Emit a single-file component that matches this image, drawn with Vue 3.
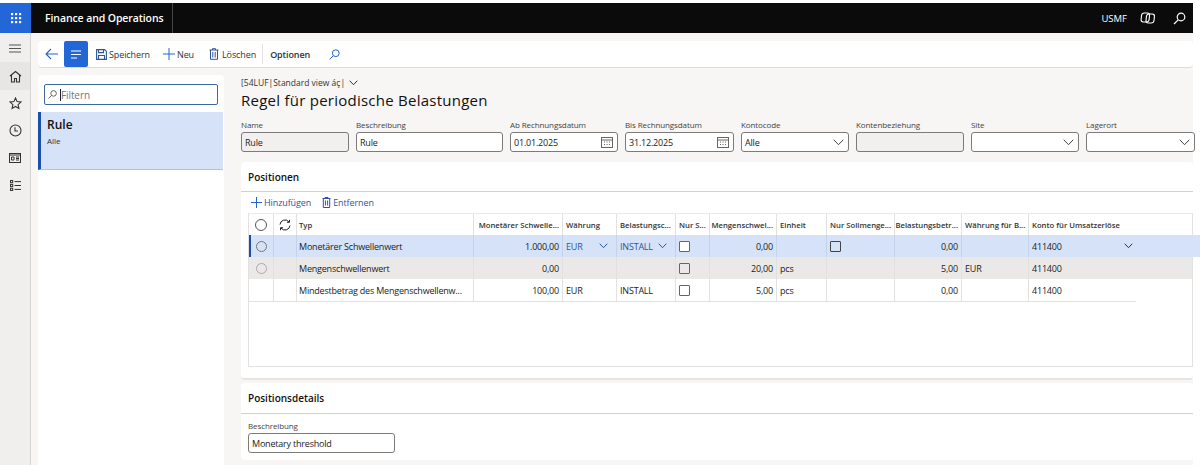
<script setup>
const columns = [
  { label: '', cls: 'sel' },
  { label: '', cls: 'sync' },
  { label: 'Typ' },
  { label: 'Monetärer Schwelle...', right: true },
  { label: 'Währung' },
  { label: 'Belastungsc...' },
  { label: 'Nur S...' },
  { label: 'Mengenschwel...', right: true },
  { label: 'Einheit' },
  { label: 'Nur Sollmenge...' },
  { label: 'Belastungsbetr...', right: true },
  { label: 'Währung für B...' },
  { label: 'Konto für Umsatzerlöse' },
]
const rows = [
  { cls: 'selected', typ: 'Monetärer Schwellenwert', mon: '1.000,00', cur: 'EUR', code: 'INSTALL', qty: '0,00', unit: '', amount: '0,00', cur2: '', acct: '411400', edit: true, radio: true, soll: true },
  { cls: 'grey', typ: 'Mengenschwellenwert', mon: '0,00', cur: '', code: '', qty: '20,00', unit: 'pcs', amount: '5,00', cur2: 'EUR', acct: '411400', radio: true },
  { cls: 'plain', typ: 'Mindestbetrag des Mengenschwellenw...', mon: '100,00', cur: 'EUR', code: 'INSTALL', qty: '5,00', unit: 'pcs', amount: '0,00', cur2: '', acct: '411400' },
]
const fields = [
  { label: 'Name', value: 'Rule', w: 108, cls: 'ro' },
  { label: 'Beschreibung', value: 'Rule', w: 147 },
  { label: 'Ab Rechnungsdatum', value: '01.01.2025', w: 108, icon: 'cal' },
  { label: 'Bis Rechnungsdatum', value: '31.12.2025', w: 109, icon: 'cal' },
  { label: 'Kontocode', value: 'Alle', w: 108, icon: 'chev' },
  { label: 'Kontenbeziehung', value: '', w: 108, cls: 'ro' },
  { label: 'Site', value: '', w: 108, icon: 'chev' },
  { label: 'Lagerort', value: '', w: 109, icon: 'chev' },
]
</script>

<template>
  <div class="page">
    <header class="topbar">
      <div class="waffle">
        <svg width="12" height="12" viewBox="0 0 12 12" fill="#fff"><g v-for="y in [1,5,9]" :key="y"><rect v-for="x in [1,5,9]" :key="x" :x="x" :y="y" width="2.2" height="2.2"/></g></svg>
      </div>
      <div class="brand">Finance and Operations</div>
      <div class="topright">
        <span class="company">USMF</span>
        <svg width="15" height="14" viewBox="0 0 15 14" fill="none" stroke="#fff" stroke-width="1.1"><rect x="1" y="2" width="8" height="9" rx="2.5" transform="skewX(-6) translate(1 0)"/><rect x="6" y="3" width="8" height="9" rx="2.5" transform="skewX(-6) translate(1 0)"/></svg>
        <svg class="tsearch" width="13" height="13" viewBox="0 0 13 13" fill="none" stroke="#fff" stroke-width="1.2"><circle cx="8" cy="5" r="3.8"/><path d="M5.2 7.8 1 12"/></svg>
      </div>
    </header>

    <div class="shell">
      <nav class="rail">
        <div class="railitem">
          <svg width="12" height="9" viewBox="0 0 12 9" stroke="#555" stroke-width="1.1"><path d="M0 1h12M0 4.500h12M0 8h12"/></svg>
        </div>
        <div class="railitem active">
          <svg width="13" height="13" viewBox="0 0 13 13" fill="none" stroke="#333" stroke-width="1.1"><path d="M1 6 6.500 1.500 12 6M2.500 5v7h3V8.500h2V12h3V5"/></svg>
        </div>
        <div class="railitem">
          <svg width="13" height="13" viewBox="0 0 13 13" fill="none" stroke="#333" stroke-width="1.1"><path d="m6.500 1 1.600 3.600 3.900.4-2.900 2.600.8 3.900-3.400-2-3.400 2 .8-3.900L1 5l3.900-.4z"/></svg>
        </div>
        <div class="railitem">
          <svg width="13" height="13" viewBox="0 0 13 13" fill="none" stroke="#333" stroke-width="1.1"><circle cx="6.500" cy="6.500" r="5.500"/><path d="M6 3.200v3.800h3"/></svg>
        </div>
        <div class="railitem">
          <svg width="12" height="10" viewBox="0 0 12 10" fill="none" stroke="#333" stroke-width="1"><rect x=".5" y=".5" width="11" height="9"/><path d="M.5 2h11M2.500 4h2.500v3H2.500zM7 4h3M7 5.500h3M7 7h3"/></svg>
        </div>
        <div class="railitem">
          <svg width="11" height="11" viewBox="0 0 11 11" fill="none" stroke="#333" stroke-width="1"><rect x=".5" y=".5" width="2.200" height="2.200"/><rect x=".5" y="4.400" width="2.200" height="2.200"/><rect x=".5" y="8.300" width="2.200" height="2.200"/><path d="M4.500 1.600H11M4.500 5.500H11M4.500 9.400H11"/></svg>
        </div>
      </nav>

      <div class="workspace">
        <div class="actionbar">
          <button class="act back">
            <svg width="13" height="12" viewBox="0 0 13 12" fill="none" stroke="#2266cc" stroke-width="1.1"><path d="M6 1 1 6l5 5M1 6h12"/></svg>
          </button>
          <button class="act listbtn">
            <svg width="12" height="9" viewBox="0 0 12 9" stroke="#fff" stroke-width="1.2"><path d="M1 1h10M1 4.500h10M1 8h6"/></svg>
          </button>
          <button class="act">
            <svg width="11" height="11" viewBox="0 0 11 11" fill="none" stroke="#2f5597" stroke-width="1.1"><path d="M.6.6h8l1.800 1.800v8H.6z"/><path d="M2.500.6v3h5v-3M2.500 10.400V6.500h6v3.900"/></svg>
            Speichern
          </button>
          <button class="act neu">
            <svg width="12" height="12" viewBox="0 0 12 12" stroke="#2266cc" stroke-width="1"><path d="M6 0v12M0 6h12"/></svg>
            Neu
          </button>
          <button class="act del">
            <svg width="10" height="12" viewBox="0 0 10 12" fill="none" stroke="#2f5597" stroke-width="1"><path d="M.5 2h9M3.500 2V.7h3V2M1.500 2v9.300h7V2M3.800 4v5.500M6.200 4v5.500"/></svg>
            Löschen
          </button>
          <span class="actsep"></span>
          <button class="act options">Optionen</button>
          <button class="act">
            <svg width="11" height="11" viewBox="0 0 11 11" fill="none" stroke="#2266cc" stroke-width="1"><circle cx="6.800" cy="4.200" r="3.400"/><path d="M4.200 6.800.6 10.400"/></svg>
          </button>
        </div>

        <div class="content">
          <aside class="listpane">
            <div class="filterwrap">
              <div class="filter">
                <svg width="9" height="9" viewBox="0 0 11 11" fill="none" stroke="#555" stroke-width="1.100"><circle cx="6.800" cy="4.200" r="3.400"/><path d="M4.200 6.800.6 10.400"/></svg>
                <span class="caret"></span>
                <span class="ph">Filtern</span>
              </div>
            </div>
            <div class="listitem">
              <div class="itemtitle">Rule</div>
              <div class="itemsub">Alle</div>
            </div>
          </aside>

          <main class="detail">
            <div class="crumb">[54LUF|Standard view áç|
              <svg width="9" height="6" viewBox="0 0 9 6" fill="none" stroke="#333"><path d="m.7.7 3.800 4 3.800-4"/></svg>
            </div>
            <h1 class="title">Regel für periodische Belastungen</h1>

            <div class="fields">
              <div v-for="f in fields" :key="f.label" class="field" :style="{ width: f.w + 'px' }">
                <label>{{ f.label }}</label>
                <div class="input" :class="f.cls">
                  <span>{{ f.value }}</span>
                  <svg v-if="f.icon === 'cal'" width="12" height="11" viewBox="0 0 12 11" fill="none" stroke="#666"><rect x=".5" y=".5" width="11" height="10"/><path d="M.5 3h11M3 5h1M5.500 5h1M8 5h1M3 7.500h1M5.500 7.500h1M8 7.500h1"/></svg>
                  <svg v-if="f.icon === 'chev'" width="11" height="7" viewBox="0 0 11 7" fill="none" stroke="#444"><path d="m.7.700 4.800 5 4.800-5"/></svg>
                </div>
              </div>
            </div>

            <section class="card positions">
              <h2>Positionen</h2>
              <div class="gridtools">
                <span class="tool">
                  <svg width="11" height="11" viewBox="0 0 11 11" stroke="#2266cc" stroke-width="1"><path d="M5.500 0v11M0 5.500h11"/></svg>
                  Hinzufügen
                </span>
                <span class="tool">
                  <svg width="9" height="11" viewBox="0 0 9 11" fill="none" stroke="#2f5597" stroke-width="1"><path d="M.5 1.500h8M3 1.500V.5h3v1M1.300 1.500v9h6.400v-9M3.400 3.500v5M5.600 3.500v5"/></svg>
                  Entfernen
                </span>
              </div>
              <div class="grid">
                <div class="row head">
                  <div v-for="(c, i) in columns" :key="i" class="cell" :class="[{ right: c.right }, c.cls]">
                    <span v-if="c.cls === 'sel'" class="radio big"></span>
                    <svg v-else-if="c.cls === 'sync'" width="12" height="12" viewBox="0 0 12 12" fill="none" stroke="#222" stroke-width="1"><path d="M1 5.500A5 5 0 0 1 10 3M11 6.500A5 5 0 0 1 2 9"/><path d="M10.500.8V3.300H8M1.500 11.200V8.700H4"/></svg>
                    <template v-else>{{ c.label }}</template>
                  </div>
                </div>
                <div v-for="r in rows" :key="r.typ" class="row" :class="r.cls">
                  <div class="cell sel"><span v-if="r.radio" class="radio"></span></div>
                  <div class="cell"></div>
                  <div class="cell">{{ r.typ }}</div>
                  <div class="cell right">{{ r.mon }}</div>
                  <div class="cell link">{{ r.cur }}<svg v-if="r.edit" width="9" height="6" viewBox="0 0 9 6" fill="none" stroke="#2f5597"><path d="m.7.700 3.800 4 3.800-4"/></svg></div>
                  <div class="cell link">{{ r.code }}<svg v-if="r.edit" width="9" height="6" viewBox="0 0 9 6" fill="none" stroke="#2f5597"><path d="m.7.700 3.800 4 3.800-4"/></svg></div>
                  <div class="cell"><span class="check"></span></div>
                  <div class="cell right">{{ r.qty }}</div>
                  <div class="cell">{{ r.unit }}</div>
                  <div class="cell"><span v-if="r.soll" class="check dark"></span></div>
                  <div class="cell right">{{ r.amount }}</div>
                  <div class="cell">{{ r.cur2 }}</div>
                  <div class="cell acct">{{ r.acct }}<svg v-if="r.edit" width="9" height="6" viewBox="0 0 9 6" fill="none" stroke="#333"><path d="m.7.700 3.800 4 3.800-4"/></svg></div>
                </div>
              </div>
            </section>

            <section class="card details">
              <h2>Positionsdetails</h2>
              <div class="detailbody">
                <label>Beschreibung</label>
                <div class="input"><span>Monetary threshold</span></div>
              </div>
            </section>
          </main>
        </div>
      </div>
    </div>
  </div>
</template>

<style>
html, body { margin: 0; background: #fff; overflow: hidden; }
</style>

<style scoped>
.page { width: 1200px; height: 465px; overflow: hidden; font-family: "Open Sans", "Noto Sans", sans-serif; color: #222; background: #fff; padding-top: 3px; box-sizing: border-box; display: flex; flex-direction: column; }
.topbar { height: 30px; width: 1193px; flex: none; background: #0b0b0b; display: flex; align-items: center; color: #fff; }
.waffle { width: 31px; height: 30px; background: #2266d8; display: flex; align-items: center; justify-content: center; }
.brand { font-size: 10.500px; font-weight: 600; padding: 0 0 0 14px; height: 100%; display: flex; align-items: center; white-space: nowrap; border-right: 1px solid #444; box-sizing: border-box; width: 142px; letter-spacing: -.1px; }
.topright { margin-left: auto; display: flex; align-items: center; gap: 13px; padding-right: 7px; }
.company { font-size: 9.500px; }
.tsearch { margin-left: 5px; }

.shell { flex: 1; display: flex; min-height: 0; }
.rail { width: 31px; flex: none; background: #f0efee; border-right: 1px solid #d8d6d4; padding-top: 2px; box-sizing: border-box; display: flex; flex-direction: column; }
.railitem { height: 27.400px; display: flex; align-items: center; justify-content: center; }
.railitem.active { background: #e8e6e4; }

.workspace { flex: none; width: 1162px; box-sizing: border-box; background: #f7f6f5; padding: 8px 0 0 7px; display: flex; flex-direction: column; }
.actionbar { width: 1155px; height: 27px; flex: none; box-sizing: border-box; background: #fff; border-radius: 4px; border-bottom: 1px solid #dedcda; display: flex; align-items: center; padding-left: 7px; }
.act { all: unset; display: inline-flex; align-items: center; gap: 2px; font-size: 9px; letter-spacing: -.1px; color: #333; margin-right: 13px; }
.back { margin-right: 6px; }
.listbtn { width: 24px; height: 26px; background: #2266d8; border-radius: 2px; justify-content: center; margin-right: 8px; }
.neu { margin-right: 15px; }
.del { gap: 3px; margin-right: 6px; }
.actsep { width: 1px; height: 20px; background: #e3e1df; margin-right: 7px; }
.options { font-weight: 600; margin-right: 19px; }

.content { flex: 1; min-height: 0; display: flex; margin-top: 7px; }
.listpane { width: 186px; flex: none; background: #fff; border-radius: 4px 4px 0 0; display: flex; flex-direction: column; }
.filterwrap { padding: 9px 6px 7px; }
.filter { height: 21px; box-sizing: border-box; border: 1px solid #3c6a9e; border-radius: 2px; display: flex; align-items: center; padding-left: 3px; gap: 3px; }
.caret { width: 1px; height: 12px; background: #222; margin-right: -3px; }
.ph { font-size: 10px; color: #777; letter-spacing: -.1px; }
.listitem { height: 58px; box-sizing: border-box; background: #d5e2f8; border-left: 3px solid #1d50a8; border-bottom: 1px solid #b9c0ca; padding: 4px 0 0 6px; width: 185px; }
.itemtitle { font-size: 12px; font-weight: 600; color: #111; line-height: 18px; }
.itemsub { font-size: 8px; color: #333; line-height: 14px; }

.detail { flex: 1; min-width: 0; padding-left: 17px; }
.crumb { font-size: 8.500px; line-height: 13px; padding-top: 1px; color: #333; display: flex; align-items: center; gap: 4px; }
.title { font-size: 15px; font-weight: 500; margin: 1px 0 8px; line-height: 20px; color: #111; letter-spacing: .25px; }
.fields { display: flex; gap: 7px; }
.field { flex: none; }
label { display: block; font-size: 8px; letter-spacing: -.1px; color: #444; line-height: 14px; white-space: nowrap; }
.input { height: 20px; box-sizing: border-box; border: 1px solid #7d7b79; border-radius: 3px; background: #fff; display: flex; align-items: center; justify-content: space-between; padding: 0 4px 0 3px; font-size: 9px; letter-spacing: -.2px; color: #222; }
.input.ro { background: #f1f0ef; }

.card { width: 952px; background: #fff; border-radius: 4px; box-sizing: border-box; }
.card h2 { font-size: 10px; font-weight: 600; color: #111; margin: 0; padding: 1px 0 0 7px; height: 28px; line-height: 28px; border-bottom: 1px solid #d3d1cf; }
.positions { height: 218px; margin-top: 10px; border-bottom: 2px solid #e6e4e2; display: flex; flex-direction: column; }
.gridtools { height: 21px; flex: none; display: flex; align-items: center; padding-left: 10px; gap: 11px; font-size: 9px; letter-spacing: -.1px; color: #2f5597; }
.tool { display: inline-flex; align-items: center; gap: 2px; }
.grid { width: 945px; margin-left: 7px; height: 154px; flex: none; box-sizing: border-box; border: 1px solid #e3e1df; border-top: 1px solid #eceae8; }
.row { display: grid; grid-template-columns: 25px 23px 177px 89px 54px 59px 34px 67px 50px 68px 67px 67px 107px; height: 22px; font-size: 9px; letter-spacing: -.2px; box-sizing: border-box; position: relative; }
.row.head { height: 21px; font-size: 7.700px; letter-spacing: 0; font-weight: 600; color: #333; }
.cell { display: flex; align-items: center; padding: 0 3px; border-right: 1px solid #e3e1df; box-sizing: border-box; white-space: nowrap; overflow: hidden; justify-content: space-between; }
.cell:nth-child(3) { padding-left: 2px; }
.cell:last-child { border-right: 0; }
.cell.right { justify-content: flex-end; }
.cell.sel, .cell.sync { justify-content: center; }
.row.head .cell.sync { padding: 0; }
.row.selected { background: #d5e2f8; width: 951px; }
.row.selected::before { content: ""; position: absolute; left: 0; top: 0; bottom: 0; width: 2px; background: #1d50a8; }
.row.selected .cell { border-right-color: #c4d3ec; }
.row.selected .link { color: #2f5597; padding-right: 8px; }
.row.grey { background: #ebe9e7; width: 943px; }
.row.plain { height: 23px; border-bottom: 1px solid #e3e1df; width: 887px; }
.radio { width: 11px; height: 11px; border: 1px solid #777; border-radius: 50%; box-sizing: border-box; }
.radio.big { width: 12px; height: 12px; border-color: #555; }
.row.grey .radio { border-color: #aaa; }
.check { width: 11px; height: 11px; box-sizing: border-box; border: 1px solid #666; background: #fff; border-radius: 1px; }
.check.dark { background: #d5e2f8; border-color: #444; }
.row.grey .check { background: #ebe9e7; }
.acct { justify-content: flex-start; }
.acct svg { margin-left: 62px; }

.details { height: 77px; margin-top: 3px; }
.details h2 { height: 29px; line-height: 29px; }
.detailbody { padding: 5px 0 0 7px; }
.detailbody .input { width: 147px; }
</style>
